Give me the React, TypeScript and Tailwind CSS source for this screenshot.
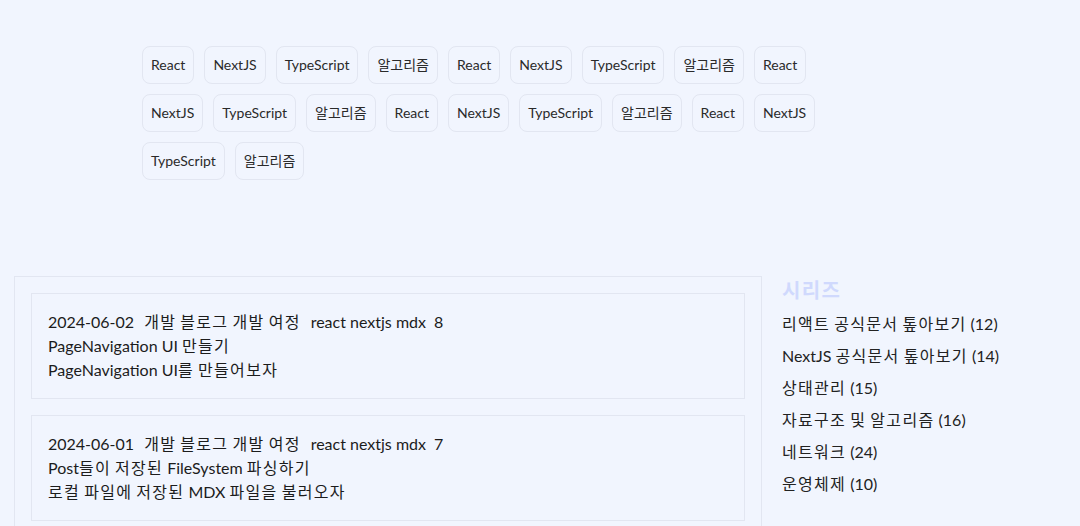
import React from 'react';

const tags = [
	'React', 'NextJS', 'TypeScript', '알고리즘',
	'React', 'NextJS', 'TypeScript', '알고리즘',
	'React', 'NextJS', 'TypeScript', '알고리즘',
	'React', 'NextJS', 'TypeScript', '알고리즘',
	'React', 'NextJS', 'TypeScript', '알고리즘',
];

const posts = [
	{
		date: '2024-06-02',
		category: '개발 블로그 개발 여정',
		tags: ['react', 'nextjs', 'mdx'],
		count: 8,
		title: 'PageNavigation UI 만들기',
		description: 'PageNavigation UI를 만들어보자',
	},
	{
		date: '2024-06-01',
		category: '개발 블로그 개발 여정',
		tags: ['react', 'nextjs', 'mdx'],
		count: 7,
		title: 'Post들이 저장된 FileSystem 파싱하기',
		description: '로컬 파일에 저장된 MDX 파일을 불러오자',
	},
	{
		date: '2024-05-30',
		category: '개발 블로그 개발 여정',
		tags: ['react', 'nextjs'],
		count: 6,
		title: '블로그 레이아웃 잡기',
		description: '기본 레이아웃을 구성해보자',
	},
];

const series = [
	{ name: '리액트 공식문서 톺아보기', count: 12 },
	{ name: 'NextJS 공식문서 톺아보기', count: 14 },
	{ name: '상태관리', count: 15 },
	{ name: '자료구조 및 알고리즘', count: 16 },
	{ name: '네트워크', count: 24 },
	{ name: '운영체제', count: 10 },
];

function Ko({ text }: { text: string }) {
	return (
		<>
			{text.split(/([\uAC00-\uD7A3]+)/).map((part, i) =>
				/[\uAC00-\uD7A3]/.test(part) ? (
					<span key={i} className="tracking-[1.3px]">
						{part}
					</span>
				) : (
					part
				),
			)}
		</>
	);
}

export default function App() {
	return (
		<div className="min-h-screen bg-[#f1f5fe] font-['Lato','Noto_Sans_CJK_KR',sans-serif] text-[#1c1c1c]">
			<div className="pl-[142px] pt-[46px]">
				<ul className="flex w-[690px] flex-wrap gap-[10px]">
					{tags.map((tag, i) => (
						<li
							key={i}
							className="rounded-lg border border-[#e2e6f1] px-2 py-2 text-sm leading-5 text-[#2a2a2a]"
						>
							{tag}
						</li>
					))}
				</ul>
			</div>

			<div className="mt-[96px] flex gap-5 pl-[14px]">
				<main className="flex w-[748px] shrink-0 flex-col gap-4 border border-[#e2e6f1] p-4">
					{posts.map((post) => (
						<article key={post.date} className="border border-[#e2e6f1] p-4 text-base leading-6">
							<div className="flex gap-2.5">
								<span>{post.date}</span>
								<span>
									<Ko text={post.category} />
								</span>
								<span>{post.tags.join(' ')}</span>
								<span className="-ml-0.5">{post.count}</span>
							</div>
							<h2>
								<Ko text={post.title} />
							</h2>
							<p>
								<Ko text={post.description} />
							</p>
						</article>
					))}
				</main>

				<aside className="flex flex-col gap-2">
					<h3 className="text-xl font-bold leading-7 text-[#d0d9fd]">
						<Ko text="시리즈" />
					</h3>
					{series.map((s) => (
						<div key={s.name} className="text-base leading-6 text-[#222]">
							<Ko text={s.name} /> ({s.count})
						</div>
					))}
				</aside>
			</div>
		</div>
	);
}
